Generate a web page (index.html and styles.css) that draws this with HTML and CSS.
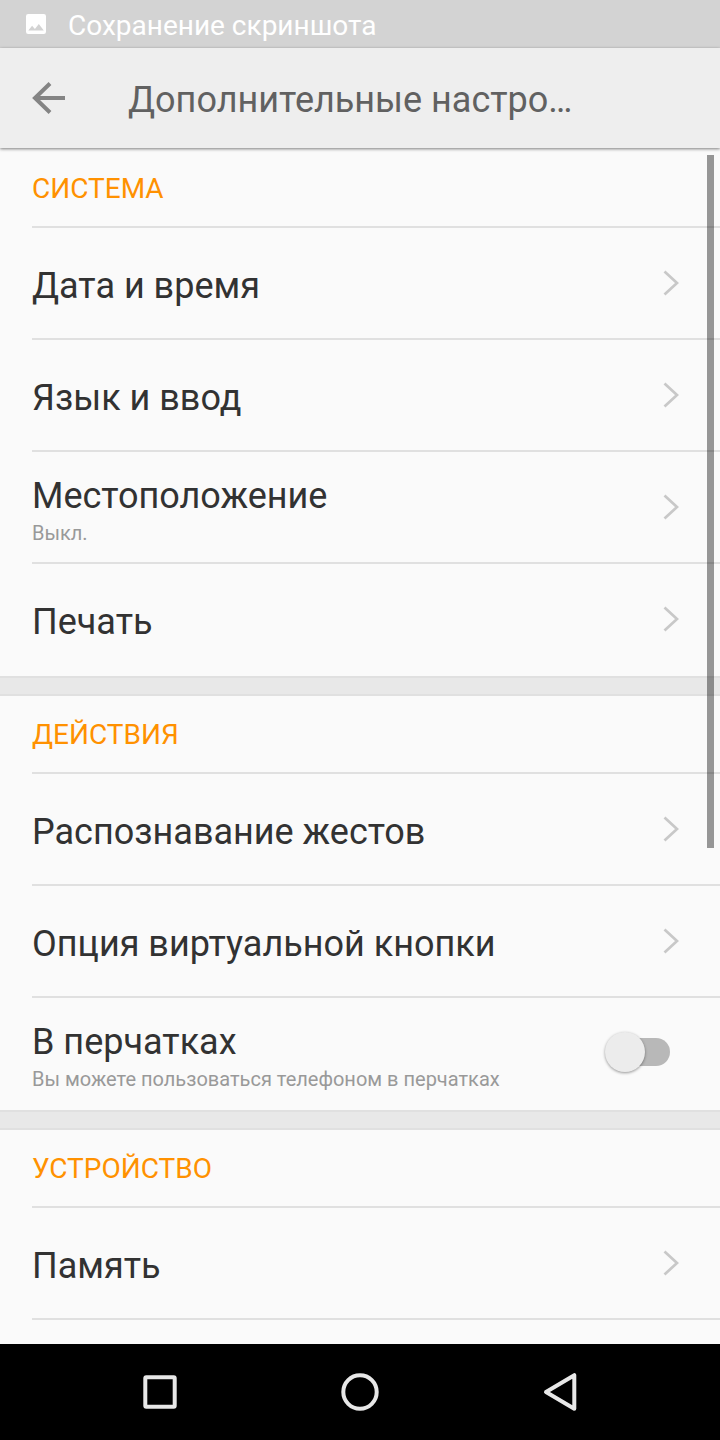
FILE: index.html
```html
<!DOCTYPE html>
<html lang="ru">
<head>
  <meta charset="UTF-8">
  <title>Дополнительные настройки</title>
  <link rel="stylesheet" href="styles.css">
</head>
<body>
  <div class="statusbar">
    <svg width="20" height="20" viewBox="0 0 20 20">
      <path fill="#fff" fill-rule="evenodd" d="M2.2 0h15.6A2.2 2.2 0 0 1 20 2.2v15.6a2.2 2.2 0 0 1-2.2 2.2H2.2A2.2 2.2 0 0 1 0 17.8V2.2A2.2 2.2 0 0 1 2.2 0zM6.1 11.7L2.3 16.6h15.5l-5-6.7-3.9 5z"/>
    </svg>
    <span>Сохранение скриншота</span>
  </div>

  <header class="toolbar">
    <svg class="back" width="34" height="34" viewBox="0 0 34 34">
      <path d="M33 17H3M18 2.5L3 17l15 14.500" fill="none" stroke="#848484" stroke-width="4"/>
    </svg>
    <h1>Дополнительные настройки</h1>
  </header>

  <main>
    <section>
      <h2>СИСТЕМА</h2>
      <div class="row">
        <div class="title">Дата и время</div>
        <svg class="arrow" viewBox="0 0 16 28"><path d="M1.500 2.500L14 14 1.500 25.500"/></svg>
      </div>
      <div class="row">
        <div class="title">Язык и ввод</div>
        <svg class="arrow" viewBox="0 0 16 28"><path d="M1.500 2.500L14 14 1.500 25.500"/></svg>
      </div>
      <div class="row">
        <div>
          <div class="title">Местоположение</div>
          <div class="summary">Выкл.</div>
        </div>
        <svg class="arrow" viewBox="0 0 16 28"><path d="M1.500 2.500L14 14 1.500 25.500"/></svg>
      </div>
      <div class="row">
        <div class="title">Печать</div>
        <svg class="arrow" viewBox="0 0 16 28"><path d="M1.500 2.500L14 14 1.500 25.500"/></svg>
      </div>
    </section>

    <section>
      <h2>ДЕЙСТВИЯ</h2>
      <div class="row">
        <div class="title">Распознавание жестов</div>
        <svg class="arrow" viewBox="0 0 16 28"><path d="M1.500 2.500L14 14 1.500 25.500"/></svg>
      </div>
      <div class="row">
        <div class="title">Опция виртуальной кнопки</div>
        <svg class="arrow" viewBox="0 0 16 28"><path d="M1.500 2.500L14 14 1.500 25.500"/></svg>
      </div>
      <div class="row">
        <div>
          <div class="title">В перчатках</div>
          <div class="summary">Вы можете пользоваться телефоном в перчатках</div>
        </div>
        <div class="switch"><div class="thumb"></div></div>
      </div>
    </section>

    <section>
      <h2>УСТРОЙСТВО</h2>
      <div class="row">
        <div class="title">Память</div>
        <svg class="arrow" viewBox="0 0 16 28"><path d="M1.500 2.500L14 14 1.500 25.500"/></svg>
      </div>
      <div class="row"></div>
    </section>
    <div class="scrollbar"></div>
  </main>

  <nav>
    <svg width="40" height="40" viewBox="0 0 40 40"><rect x="5.300" y="5.300" width="29.400" height="29.400" rx="1"/></svg>
    <svg width="40" height="40" viewBox="0 0 40 40"><circle cx="20" cy="20" r="16.700"/></svg>
    <svg width="40" height="40" viewBox="0 0 40 40"><path d="M6 20L34.300 3.200v33.600z"/></svg>
  </nav>
</body>
</html>
```

FILE: styles.css
```css
body {
  margin: 0;
  height: 1440px;
  display: flex;
  flex-direction: column;
  overflow: hidden;
  font-family: Roboto, sans-serif;
  background: #fafafa;
}
h1, h2 { margin: 0; font-weight: 400; }
svg { display: block; flex: none; }

.statusbar {
  height: 48px;
  box-sizing: border-box;
  padding: 0 26px 0;
  display: flex;
  align-items: center;
  gap: 22px;
  background: #d3d3d3;
  color: #fff;
  font-size: 28px;
}
.statusbar span { padding-top: 3px; }
.toolbar {
  height: 100px;
  flex: none;
  display: flex;
  align-items: center;
  padding-left: 32px;
  background: #eee;
  box-shadow: 0 1px 3px rgba(0,0,0,0.5);
  z-index: 1;
}
.toolbar h1 {
  width: 460px;
  margin-left: 62px;
  padding-top: 3px;
  overflow: hidden;
  text-overflow: ellipsis;
  white-space: nowrap;
  font-size: 36px;
  color: #616161;
}

main {
  position: relative;
  flex: 1;
  min-height: 0;
  padding-top: 2px;
  overflow: hidden;
}
section { padding-bottom: 2px; }
section + section {
  border-top: 2px solid #e0e0e0;
}
section + section::before {
  content: "";
  display: block;
  height: 16px;
  background: #e8e8e8;
  border-bottom: 2px solid #e0e0e0;
}
h2 {
  height: 76px;
  padding-left: 32px;
  line-height: 78px;
  font-size: 28px;
  color: #ff9100;
}
.row {
  height: 112px;
  box-sizing: border-box;
  margin-left: 32px;
  padding-right: 41px;
  border-top: 2px solid #e0e0e0;
  display: flex;
  align-items: center;
  justify-content: space-between;
}
.title { padding-top: 5px; font-size: 36px; line-height: 42px; color: #323232; }
.summary { padding-top: 4px; font-size: 20px; line-height: 24px; color: #999; }
.arrow { width: 16px; height: 28px; }
.arrow path { fill: none; stroke: #c8c8c8; stroke-width: 2.7; }

.switch {
  width: 56px;
  height: 28px;
  margin: 0 9px 2px 0;
  border-radius: 14px;
  background: #b8b8b8;
  position: relative;
}
.thumb {
  position: absolute;
  left: -9px;
  top: -6px;
  width: 40px;
  height: 40px;
  border-radius: 50%;
  background: #ececec;
  box-shadow: 0 1px 3px rgba(0,0,0,0.4);
}
.scrollbar {
  position: absolute;
  left: 706.5px;
  top: 6.5px;
  width: 7px;
  height: 693px;
  background: rgba(0,0,0,0.4);
}

nav {
  height: 96px;
  flex: none;
  display: flex;
  align-items: center;
  justify-content: center;
  gap: 160px;
  background: #000;
}
nav svg { fill: none; stroke: #e8e8e8; stroke-width: 4; stroke-linejoin: round; }
```
